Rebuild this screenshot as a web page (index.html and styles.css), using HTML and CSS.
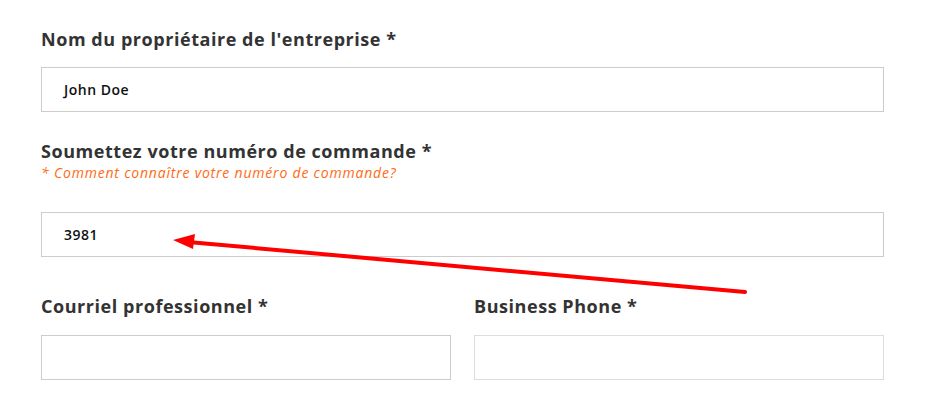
FILE: index.html
```html
<!DOCTYPE html>
<html lang="fr">
<head>
<meta charset="utf-8">
<title>Formulaire</title>
<link rel="stylesheet" href="styles.css">
</head>
<body>
<div class="form">
  <div class="field f1">
    <label class="label">Nom du propriétaire de l'entreprise *</label>
    <div class="input"><span class="value">John Doe</span></div>
  </div>
  <div class="field f2">
    <label class="label">Soumettez votre numéro de commande *</label>
    <div class="hint">* Comment connaître votre numéro de commande?</div>
    <div class="input input-gap"><span class="value">3981</span></div>
  </div>
  <div class="row f3">
    <div class="field">
      <label class="label">Courriel professionnel *</label>
      <div class="input"></div>
    </div>
    <div class="field">
      <label class="label">Business Phone *</label>
      <div class="input light"></div>
    </div>
  </div>
  <svg class="arrow" width="942" height="408" viewBox="0 0 942 408">
    <line x1="745" y1="292" x2="188" y2="242" stroke="#ff0000" stroke-width="4" stroke-linecap="round"/>
    <polygon points="173,240 195,234 193,249" fill="#ff0000"/>
  </svg>
</div>
</body>
</html>
```
FILE: styles.css
```css
html, body {
  margin: 0;
  padding: 0;
  background: #ffffff;
}
.form {
  position: relative;
  width: 843px;
  padding: 27px 0 0 41px;
  font-family: "Open Sans", "Liberation Sans", sans-serif;
}
.field {
  display: flex;
  flex-direction: column;
}
.label {
  font-size: 18px;
  font-weight: 700;
  line-height: 24px;
  color: #333333;
  letter-spacing: 0.55px;
}
.input {
  margin-top: 16px;
  height: 43px;
  border: 1px solid #cccccc;
  display: flex;
  align-items: center;
  padding-left: 22px;
  box-sizing: content-box;
}
.input.light {
  border-color: #dddddd;
}
.value {
  font-size: 14px;
  font-weight: 600;
  color: #111111;
  letter-spacing: 0.5px;
}
.f2 {
  margin-top: 27px;
}
.hint {
  font-size: 14px;
  font-style: italic;
  line-height: 20px;
  color: #ff6a13;
  letter-spacing: 0.8px;
}
.input-gap {
  margin-top: 29px;
}
.row {
  margin-top: 37px;
  display: grid;
  grid-template-columns: 1fr 1fr;
  gap: 23px;
}
.row .input {
  margin-top: 17px;
}
.arrow {
  position: absolute;
  left: 0;
  top: 0;
  pointer-events: none;
}
```
